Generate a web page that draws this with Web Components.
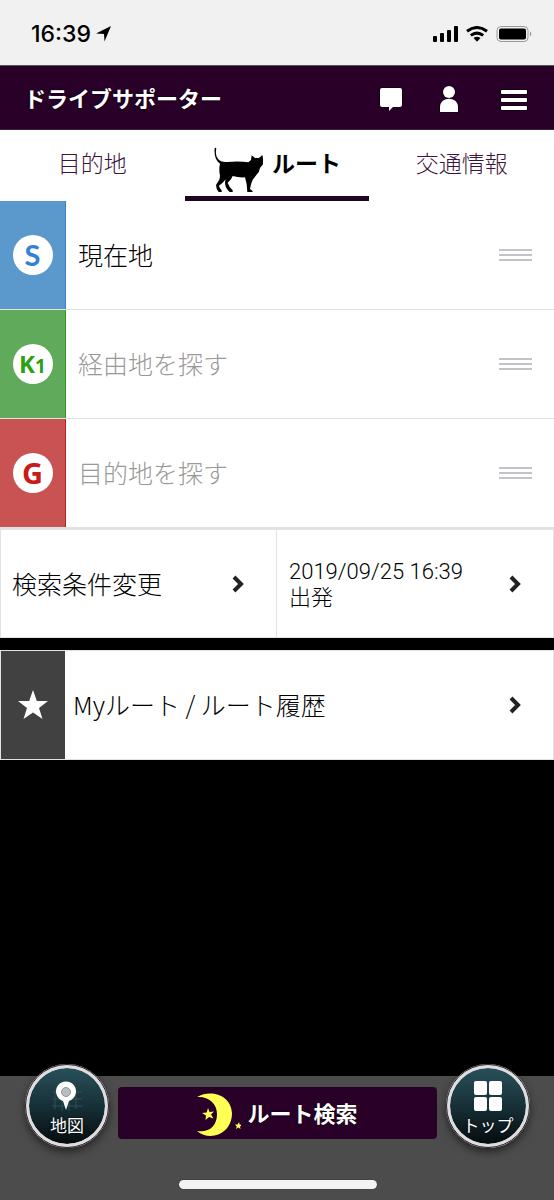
<!DOCTYPE html>
<html lang="ja">
<head>
<meta charset="utf-8">
<meta name="viewport" content="width=device-width, initial-scale=1">
<title>ドライブサポーター</title>
<style>
  html { background: #000; }
  body { margin: 0; font-family: "Noto Sans CJK JP", sans-serif; font-weight: 300; color: #000; }
</style>
</head>
<body>
<drive-app></drive-app>
<script>
const define = (name, html) => {
  const template = document.createElement('template');
  template.innerHTML = `<style>
    *, *::before { box-sizing: border-box; }
    button { font: inherit; color: inherit; background: none; border: 0; padding: 0; margin: 0; text-align: left; cursor: pointer; }
    svg { display: block; flex: none; }
  </style>` + html;
  customElements.define(name, class extends HTMLElement {
    constructor() {
      super();
      this.attachShadow({ mode: 'open' }).append(template.content.cloneNode(true));
    }
  });
};

define('status-bar', `
<style>
  :host { display: flex; align-items: center; height: 66px; padding: 2px 22px 0 31px; background: #f1f1f1; border-bottom: 1px solid #555; box-sizing: border-box; }
  time { font: 500 23px/28px Inter, sans-serif; }
  .arrow { margin-left: 5px; }
  .icons { display: flex; gap: 8px; margin-left: auto; }
</style>
<time>16:39</time>
<svg class="arrow" width="16" height="16" viewBox="0 0 16 16"><path d="M0 7.500 15 0 8.500 15.500 8 8Z"/></svg>
<div class="icons">
  <svg width="25" height="16" viewBox="0 0 25 16"><rect y="10" width="4" height="6" rx="1"/><rect x="7" y="7" width="4" height="9" rx="1"/><rect x="14" y="4" width="4" height="12" rx="1"/><rect x="21" width="4" height="16" rx="1"/></svg>
  <svg width="22" height="16" viewBox="0 0 22 16" fill="none" stroke="#000" stroke-width="3"><path d="M1 5.200Q11-2.200 21 5.200M4.800 9.400Q11 4.800 17.200 9.400"/><path d="M7.500 12Q11 9.500 14.500 12L11 15.700Z" fill="#000" stroke="none"/></svg>
  <svg width="36" height="16" viewBox="0 0 36 16"><rect x="1" y=".5" width="31" height="15" rx="4" fill="none" stroke="#999"/><rect x="3" y="2.500" width="27" height="11" rx="2"/><path d="M34 5.500Q36.500 8 34 10.500Z" fill="#888"/></svg>
</div>`);

define('app-header', `
<style>
  :host { display: flex; align-items: center; gap: 39px; height: 64px; padding: 2px 26px 0 24px; color: #fff; background: #280028; border-bottom: 1px solid #442044; box-sizing: border-box; }
  h1 { flex: 1; margin: 0; padding-bottom: 4px; font-size: 22px; line-height: 32px; font-weight: 700; text-shadow: 0 0 2px #000; white-space: nowrap; }
  nav { display: flex; gap: 34px; }
  svg { fill: #fff; stroke: #000; stroke-width: 1; overflow: visible; paint-order: stroke; }
</style>
<h1>ドライブサポーター</h1>
<nav>
  <button aria-label="メッセージ"><svg width="24" height="28" viewBox="0 0 24 28"><path d="M3 3H21Q23 3 23 5V20Q23 22 21 22H14L10 26V22H3Q1 22 1 20V5Q1 3 3 3Z"/></svg></button>
  <button aria-label="マイページ"><svg width="24" height="28" viewBox="0 0 24 28"><circle cx="12" cy="7" r="6"/><path d="M3 27V22C3 11 21 11 21 22V27Z"/></svg></button>
</nav>
<button aria-label="メニュー"><svg width="28" height="28" viewBox="0 0 28 28"><rect x="1" y="5" width="26" height="4" rx="1"/><rect x="1" y="13" width="26" height="4" rx="1"/><rect x="1" y="21" width="26" height="4" rx="1"/></svg></button>`);

define('tab-item', `
<style>
  :host { display: flex; flex: 1 1 0; border-bottom: 5px solid transparent; color: #3c1440; }
  :host([selected]) { border-color: #200424; color: #000; font-weight: 700; }
  button { flex: 1; display: flex; align-items: flex-start; justify-content: center; gap: 7px; padding-top: 16px; font-size: 23px; line-height: 32px; white-space: nowrap; }
</style>
<button role="tab"><slot name="icon"></slot><slot></slot></button>`);

define('cat-icon', `
<style>:host { display: block; }</style>
<svg width="52" height="48" viewBox="638 48 156 144"><path d="M643 55Q646 51 648 56C645 69 647 82 657 91Q663 97 680 96Q720 93 744 97L752 90 754 76 764 84 776 84 786 75 788 85 788 103 779 114Q777 128 768 135L757 149Q751 162 749 177L756 182 757 186H741L739 163 734 142Q714 143 697 138L692 148 682 158Q686 171 697 181V186H688C678 178 674 168 674 157L676 148 667 158 656 167Q657 176 664 181V186H655Q647 176 647 165L654 154Q659 146 659 137 655 118 659 101C646 92 641 76 643 55Z"/></svg>`);

define('route-point', `
<style>
  :host { display: grid; grid-template-columns: 66px 1fr; height: 109px; border-bottom: 1px solid #e2e2e2; background: #fff; box-sizing: border-box; }
  .mark { display: grid; place-items: center; background: var(--tone); border-right: 1px solid var(--ink); }
  .disc { display: flex; align-items: baseline; justify-content: center; width: 40px; height: 40px; border-radius: 50%; background: #fff; color: var(--ink); font: 700 29px/40px "Noto Sans", sans-serif; }
  button { display: flex; align-items: center; justify-content: space-between; padding: 0 22px 0 12px; font-size: 25px; line-height: 36px; color: var(--text, #000); white-space: nowrap; }
  .label { padding-bottom: 2px; }
</style>
<div class="mark"><span class="disc"><slot name="mark"></slot></span></div>
<button><span class="label"><slot></slot></span><svg width="33" height="13" viewBox="0 0 33 13" fill="#c3c3c9"><path d="M0 0H33V2H0ZM0 5H33V7H0ZM0 10H33V12H0Z"/></svg></button>`);

define('link-cell', `
<style>
  :host { display: flex; min-width: 0; background: #fff; border: 1px solid #e2e2e2; box-sizing: border-box; }
  button { flex: 1; display: flex; align-items: center; justify-content: space-between; padding: 0 31px 0 var(--inset, 11px); font-size: 25px; line-height: 36px; white-space: nowrap; }
  .label { padding-bottom: 2px; }
</style>
<slot name="lead"></slot>
<button><span class="label"><slot></slot></span><svg width="13" height="18" viewBox="0 0 13 18" fill="none" stroke="#222" stroke-width="4"><path d="M2 2 9 9 2 16"/></svg></button>`);

define('round-button', `
<style>
  :host { display: block; flex: none; margin-top: -23px; }
  button { display: flex; flex-direction: column; align-items: center; width: 84px; height: 84px; padding-top: 13px; border: 4px solid #dfdcdf; border-radius: 50%; outline: 1px solid #222; outline-offset: -1px; background: linear-gradient(#28505a, #173038 50%, #050c0e) padding-box, #dfdcdf; box-shadow: 0 4px 8px #0008; color: #fff; font-size: 17px; line-height: 24px; font-weight: 400; text-shadow: 0 0 2px #000; }
  span { white-space: nowrap; }
</style>
<button><slot name="icon"></slot><span><slot></slot></span></button>`);

define('bottom-bar', `
<style>
  :host { display: block; padding: 11px 24px 11px 25px; background: #4c4c4c; }
  .row { display: flex; align-items: flex-start; gap: 9px; }
  .search { flex: 1; display: flex; align-items: center; justify-content: center; gap: 6px; height: 52px; border-radius: 4px; background: #280028; color: #fff; font-size: 22px; line-height: 32px; font-weight: 700; text-shadow: 0 0 2px #000; white-space: nowrap; }
  .search span { padding-bottom: 2px; }
  .home { width: 198px; height: 9px; margin: 32px auto 0; border-radius: 5px; background: #f2f2f2; box-shadow: 0 0 1px #000; }
</style>
<div class="row">
  <round-button>地図
    <svg slot="icon" width="32" height="32" viewBox="0 0 32 32"><path d="M1 11H31M1 18H31M1 25H31M4 8V28M11 8V30M18 8V30M25 8V28" stroke="#2f5057" stroke-width="1"/><path d="M15 29 12 20A10 10 0 1 1 18 20Z" fill="#fff"/><circle cx="15" cy="11" r="4.500" fill="#b8bdc0" stroke="#8d979b"/></svg>
  </round-button>
  <button class="search">
    <svg width="44" height="46" viewBox="0 -3 44 46" fill="#ffff55"><path d="M0 4C14-4 34 2 35 20C35 41 13 49 0 38C12 40 20 33 20 21C20 10 11 3 0 4Z"/><path d="M11 15 12.500 19 17 18.500 14 21.500 16.500 25.500 12 24 8.500 27 9 22.500 5 20 9.700 19.500Z"/><path d="M42 29 42.600 31.500 45 32 43 33.500 43.500 36 41.300 34.500 39 36 39.800 33.500 38 31.500 40.700 31.500Z"/></svg>
    <span>ルート検索</span>
  </button>
  <round-button>トップ
    <svg slot="icon" width="32" height="32" viewBox="0 0 32 32" fill="#fff"><rect x="2" y="0" width="13" height="14" rx="2"/><rect x="17" y="0" width="13" height="14" rx="2"/><rect x="2" y="16" width="13" height="14" rx="2"/><rect x="17" y="16" width="13" height="14" rx="2"/></svg>
  </round-button>
</div>
<div class="home"></div>`);

define('drive-app', `
<style>
  :host { display: flex; flex-direction: column; min-height: 100vh; background: #000; }
  .tabs { display: flex; height: 71px; background: #fff; }
  section { display: grid; grid-auto-rows: 109px; padding-bottom: 1px; background: #e2e2e2; }
  .pair { display: grid; grid-template-columns: 1fr 1fr; height: 109px; background: #fff; }
  .pair link-cell + link-cell { border-left: 0; }
  .date { display: block; padding: 4px 0 0 1px; font: 300 22px/26px Roboto, "Noto Sans CJK JP", sans-serif; }
  .my { height: 110px; margin-top: 12px; --inset: 8px; }
  .star { display: grid; place-items: center; width: 64px; background: #414141; }
  .s { --tone: #5b99cd; --ink: #3380d5; }
  .k { --tone: #5faa5b; --ink: #2ba012; --text: #999; }
  .g { --tone: #c95353; --ink: #c81c18; --text: #999; }
  .s span { font-family: Lato, sans-serif; }
  .k span { font-size: 24px; }
  .k small { font-size: 19px; }
  bottom-bar { margin-top: auto; }
</style>
<status-bar></status-bar>
<app-header></app-header>
<div class="tabs" role="tablist">
  <tab-item>目的地</tab-item>
  <tab-item selected><cat-icon slot="icon"></cat-icon>ルート</tab-item>
  <tab-item>交通情報</tab-item>
</div>
<main>
  <section>
    <route-point class="s"><span slot="mark">S</span>現在地</route-point>
    <route-point class="k"><span slot="mark">K<small>1</small></span>経由地を探す</route-point>
    <route-point class="g"><span slot="mark">G</span>目的地を探す</route-point>
  </section>
  <div class="pair">
    <link-cell>検索条件変更</link-cell>
    <link-cell><span class="date">2019/09/25 16:39<br>出発</span></link-cell>
  </div>
  <link-cell class="my"><div class="star" slot="lead"><svg width="32" height="30" viewBox="0 0 32 30" fill="#fff"><path d="M16 0 19.800 11H31L22 18 25.500 29 16 22.500 6.500 29 10 18 1 11H12.200Z"/></svg></div>Myルート / ルート履歴</link-cell>
</main>
<bottom-bar></bottom-bar>`);
</script>
</body>
</html>
